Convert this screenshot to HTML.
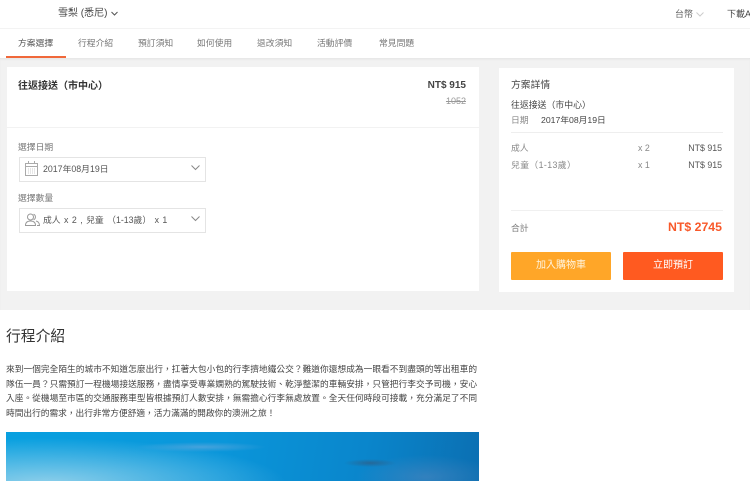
<!DOCTYPE html>
<html lang="zh-Hant">
<head>
<meta charset="utf-8">
<style>
html,body{margin:0;padding:0;background:#fff;width:750px;height:481px;overflow:hidden;}
body{position:relative;font-family:"Liberation Sans","Noto Sans CJK TC",sans-serif;color:#333;}
.a{position:absolute;white-space:nowrap;line-height:16px;}
.box{position:absolute;box-sizing:border-box;}
.tab{position:absolute;top:36px;font-size:8.8px;line-height:14px;color:#777;white-space:nowrap;}
.sel{position:absolute;left:19px;width:187px;height:25px;box-sizing:border-box;border:1px solid #e4e4e4;background:#fff;}
.l{height:14.5px;text-align:justify;text-align-last:justify;white-space:nowrap;}
</style>
</head>
<body>
<div class="box" style="left:0;top:28px;width:750px;height:1px;background:#f3f3f3;"></div>
<div class="a" style="left:58px;top:6px;font-size:10px;color:#444;">雪梨 (悉尼)</div>
<svg class="box" style="left:111px;top:11px" width="7" height="5" viewBox="0 0 7 5"><path d="M.5 1l3 3 3-3" fill="none" stroke="#555" stroke-width="1"/></svg>
<div class="a" style="left:675px;top:6px;font-size:9px;color:#666;">台幣</div>
<svg class="box" style="left:696px;top:12px" width="8" height="5" viewBox="0 0 8 5"><path d="M.5 .5L4 4 7.5 .5" fill="none" stroke="#ccc" stroke-width="1"/></svg>
<div class="box" style="left:727px;top:6px;width:23px;height:16px;overflow:hidden;font-size:9px;line-height:16px;color:#444;white-space:nowrap;">下載APP</div>

<div class="tab" style="left:18px;color:#555;">方案選擇</div>
<div class="box" style="left:6px;top:56px;width:60px;height:2px;background:#f0683a;z-index:2;"></div>
<div class="tab" style="left:78px;">行程介紹</div>
<div class="tab" style="left:138px;">預訂須知</div>
<div class="tab" style="left:197px;">如何使用</div>
<div class="tab" style="left:257px;">退改須知</div>
<div class="tab" style="left:317px;">活動評價</div>
<div class="tab" style="left:379px;">常見問題</div>

<div class="box" style="left:0;top:58px;width:750px;height:252px;background:#f2f2f2;box-shadow:inset 0 2px 2px -1px #e2e2e2;"></div>

<div class="box" style="left:7px;top:67px;width:472px;height:224px;background:#fff;"></div>
<div class="box" style="left:7px;top:127px;width:472px;height:1px;background:#f2f2f2;"></div>
<div class="a" style="left:18px;top:79px;font-size:10px;font-weight:bold;color:#333;">往返接送（市中心）</div>
<div class="a" style="right:284px;top:78px;font-size:10px;font-weight:bold;color:#444;">NT$ 915</div>
<div class="a" style="right:284px;top:93px;font-size:9px;color:#999;text-decoration:line-through;">1052</div>

<div class="a" style="left:18px;top:139px;font-size:8.8px;color:#777;">選擇日期</div>
<div class="sel" style="top:157px;"></div>
<svg class="box" style="left:25px;top:161px" width="13" height="15" viewBox="0 0 13 15"><rect x=".5" y="2.5" width="12" height="12" fill="none" stroke="#aaa"/><path d="M.5 5.5h12M3.5 0v3M9.500 0v3" fill="none" stroke="#aaa"/><path d="M3 8h7M3 10h7M3 12h7" stroke="#ccc" stroke-dasharray="1 1"/></svg>
<div class="a" style="left:43px;top:161px;font-size:8.8px;color:#555;">2017年08月19日</div>
<svg class="box" style="left:191px;top:165px" width="9" height="6" viewBox="0 0 9 6"><path d="M.5 .5L4.500 4.500 8.500 .5" fill="none" stroke="#888"/></svg>

<div class="a" style="left:18px;top:190px;font-size:8.8px;color:#777;">選擇數量</div>
<div class="sel" style="top:208px;"></div>
<svg class="box" style="left:25px;top:213px" width="15" height="13" viewBox="0 0 15 13"><circle cx="5.500" cy="4" r="3" fill="none" stroke="#999"/><path d="M.5 12.500c0-3 2-4.500 5-4.500s5 1.500 5 4.500zM8.500 1.200a3 3 0 0 1 0 5.600M11 8c2 .5 3.500 2 3.500 4.500H12" fill="none" stroke="#999"/></svg>
<div class="a" style="left:43px;top:212px;font-size:8.8px;color:#555;word-spacing:1px;">成人 x 2 , 兒童 （1-13歲） x 1</div>
<svg class="box" style="left:191px;top:216px" width="9" height="6" viewBox="0 0 9 6"><path d="M.5 .5L4.500 4.500 8.500 .5" fill="none" stroke="#888"/></svg>

<div class="box" style="left:499px;top:68px;width:235px;height:224px;background:#fff;"></div>
<div class="a" style="left:511px;top:78px;font-size:9.8px;color:#444;">方案詳情</div>
<div class="a" style="left:511px;top:97px;font-size:8.9px;color:#444;">往返接送（市中心）</div>
<div class="a" style="left:511px;top:112px;font-size:8.8px;color:#888;">日期</div>
<div class="a" style="left:541px;top:112px;font-size:8.7px;color:#444;">2017年08月19日</div>
<div class="box" style="left:511px;top:132px;width:212px;height:1px;background:#eee;"></div>
<div class="a" style="left:511px;top:140px;font-size:8.8px;color:#888;">成人</div>
<div class="a" style="left:638px;top:140px;font-size:8.8px;color:#888;">x 2</div>
<div class="a" style="right:28px;top:140px;font-size:8.8px;color:#555;">NT$ 915</div>
<div class="a" style="left:511px;top:157px;font-size:8.8px;color:#888;letter-spacing:.4px;">兒童（1-13歲）</div>
<div class="a" style="left:638px;top:157px;font-size:8.8px;color:#888;">x 1</div>
<div class="a" style="right:28px;top:157px;font-size:8.8px;color:#555;">NT$ 915</div>
<div class="box" style="left:511px;top:210px;width:212px;height:1px;background:#f0f0f0;"></div>
<div class="a" style="left:511px;top:220px;font-size:8.8px;color:#777;">合計</div>
<div class="a" style="right:28px;top:219px;font-size:12.3px;font-weight:bold;color:#f8592a;">NT$ 2745</div>
<div class="box" style="left:511px;top:252px;width:100px;height:28px;background:#ffa628;border-radius:1px;color:#fff3dc;font-size:10px;line-height:28px;text-align:center;">加入購物車</div>
<div class="box" style="left:623px;top:252px;width:100px;height:28px;background:#ff5a20;border-radius:1px;color:#fff;font-size:10px;line-height:28px;text-align:center;">立即預訂</div>

<div class="a" style="left:6px;top:327px;font-size:14.8px;line-height:20px;color:#333;">行程介紹</div>
<div class="box" style="left:6px;top:362px;width:471px;font-size:8.7px;line-height:14.5px;color:#444;">
<div class="l">來到一個完全陌生的城市不知道怎麼出行，扛著大包小包的行李擠地鐵公交？難道你還想成為一眼看不到盡頭的等出租車的</div>
<div class="l">隊伍一員？只需預訂一程機場接送服務，盡情享受專業嫻熟的駕駛技術、乾淨整潔的車輛安排，只管把行李交予司機，安心</div>
<div class="l">入座。從機場至市區的交通服務車型皆根據預訂人數安排，無需擔心行李無處放置。全天任何時段可接載，充分滿足了不同</div>
<div class="l" style="text-align-last:left;">時間出行的需求，出行非常方便舒適，活力滿滿的開啟你的澳洲之旅！</div>
</div>
<div class="box" style="left:6px;top:432px;width:473px;height:49px;background:
radial-gradient(ellipse 26px 4px at 364px 31px,rgba(60,80,110,.55),rgba(60,80,110,0) 100%),
radial-gradient(ellipse 65px 5px at 195px 15px,rgba(110,170,220,.6),rgba(120,200,235,0) 100%),
radial-gradient(ellipse 70px 22px at 420px 45px,rgba(110,140,190,.4),rgba(110,140,190,0) 100%),
radial-gradient(ellipse 240px 46px at 40px 52px,rgba(150,210,235,.95),rgba(120,200,235,0) 100%),
linear-gradient(100deg,#08a0e0 0%,#0a96da 45%,#0a86cc 75%,#0b6fb2 100%);"></div>
</body>
</html>
